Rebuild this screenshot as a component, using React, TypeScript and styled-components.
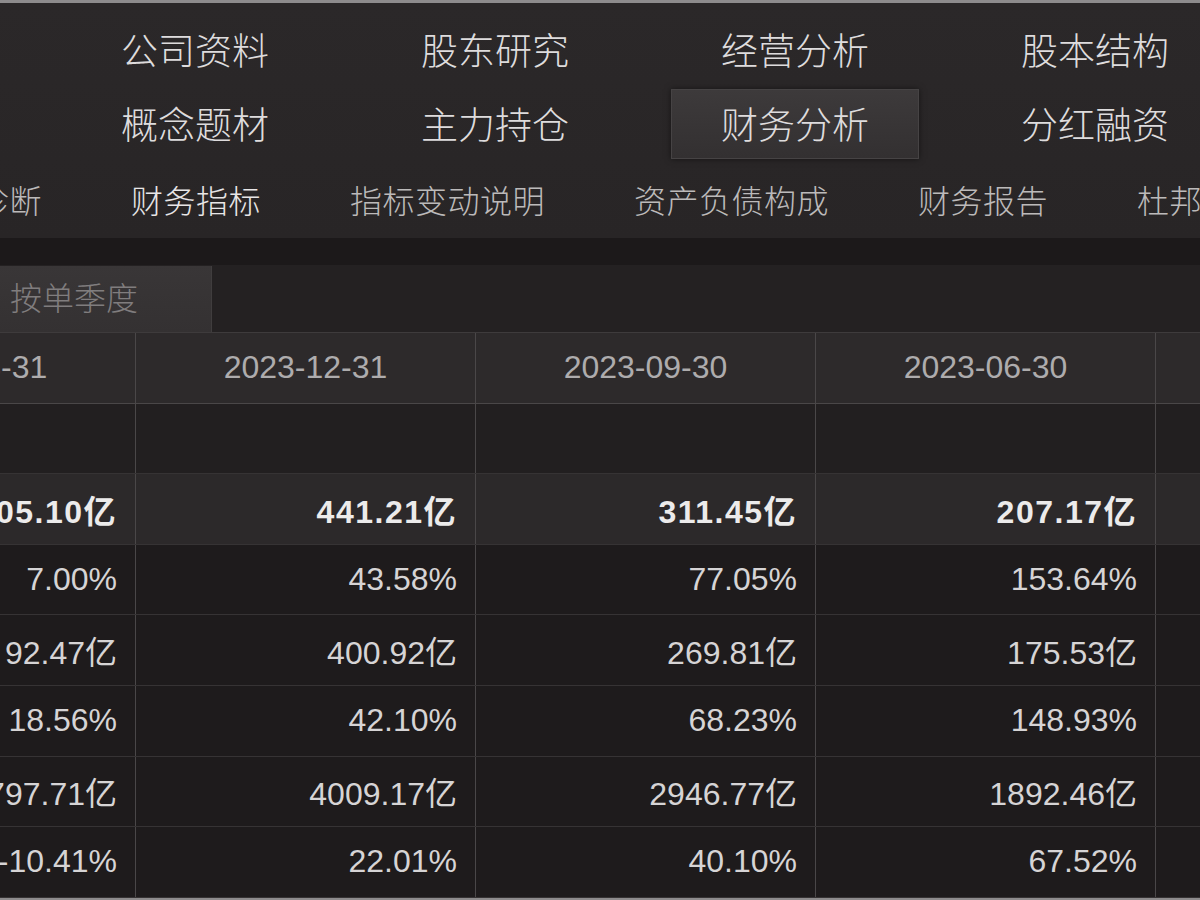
import React from 'react'
import styled, { createGlobalStyle } from 'styled-components'

type Row = {
  kind: 'section' | 'key' | 'plain'
  values: Array<string>
}

const GlobalStyle = createGlobalStyle`
  html, body {
    margin: 0;
    padding: 0;
    background: #1e1b1c;
    overflow: hidden;
  }
  body {
    font-family: "Liberation Sans", "Noto Sans CJK SC", sans-serif;
  }
`

const Screen = styled.div`
  width: 1200px;
  height: 900px;
  box-sizing: border-box;
  overflow: hidden;
  background: #1e1b1c;
  border-top: 3px solid #8e8c8d;
  border-bottom: 2px solid #8e8c8d;
`

const NavPanel = styled.div`
  background: linear-gradient(#2b2829, #282526);
`

const MainNav = styled.div`
  display: grid;
  grid-template-columns: repeat(4, 300px);
  grid-auto-rows: 70px;
  row-gap: 4px;
  margin-left: 45px;
  padding-top: 12px;
`

const MainNavItem = styled.div`
  display: flex;
  align-items: center;
  justify-content: center;
`

const MainNavLabel = styled.span`
  display: flex;
  align-items: center;
  justify-content: center;
  width: 248px;
  height: 70px;
  box-sizing: border-box;
  padding-bottom: 2px;
  font-family: "Noto Sans CJK SC", sans-serif;
  font-size: 37px;
  font-weight: 300;
  color: #dedcdd;
  border: 1px solid ${props => props.$active ? '#464344' : 'transparent'};
  background: ${props => props.$active ? 'linear-gradient(#3d3a3b, #333031)' : 'transparent'};
  box-shadow: ${props => props.$active ? '0 0 6px rgba(0, 0, 0, 0.5)' : 'none'};
`

const SubNav = styled.div`
  display: flex;
  align-items: center;
  gap: 89px;
  height: 79px;
  margin-left: -88px;
  white-space: nowrap;
`

const SubNavItem = styled.span`
  font-family: "Noto Sans CJK SC", sans-serif;
  font-size: 32px;
  font-weight: 300;
  letter-spacing: 0.5px;
  color: ${props => props.$active ? '#e8e6e7' : '#bcbaba'};
`

const Divider = styled.div`
  height: 27px;
  background: #1c191a;
`

const PeriodBar = styled.div`
  display: flex;
  height: 68px;
  background: #242122;
  border-bottom: 1px solid #3e3b3c;
  box-sizing: border-box;
`

const PeriodTab = styled.div`
  display: flex;
  align-items: center;
  width: 212px;
  height: 66px;
  margin-top: 1px;
  padding: 0 0 6px 10px;
  box-sizing: border-box;
  background: linear-gradient(#393637, #343132);
  border-right: 1px solid #403d3e;
  font-family: "Noto Sans CJK SC", sans-serif;
  font-size: 32px;
  font-weight: 300;
  color: #807d7e;
`

const Table = styled.div`
  margin-left: -204px;
`

const TableRow = styled.div`
  display: grid;
  grid-template-columns: repeat(5, 340px);
  height: 70.6px;
  box-sizing: border-box;
  border-bottom: 1px solid ${props => props.$kind === 'head' ? '#4a4748' : '#363334'};
  background: ${props =>
    props.$kind === 'head' ? '#2d2a2b' :
    props.$kind === 'key' ? '#2c292a' :
    props.$kind === 'section' ? '#221f20' : '#1e1b1c'};
`

const Cell = styled.div`
  display: flex;
  align-items: center;
  justify-content: ${props => props.$head ? 'center' : 'flex-end'};
  padding-right: ${props => props.$head ? '0' : '18px'};
  border-right: 1px solid #4a4748;
  font-size: 32px;
  font-weight: ${props => props.$bold ? 'bold' : 'normal'};
  letter-spacing: ${props => props.$bold ? '1.5px' : '0'};
  color: ${props => props.$head ? '#aeacad' : props.$bold ? '#ecebeb' : '#d6d4d5'};
  white-space: nowrap;
`

const mainTabs = [
  '公司资料', '股东研究', '经营分析', '股本结构',
  '概念题材', '主力持仓', '财务分析', '分红融资',
]

const subTabs = ['财务诊断', '财务指标', '指标变动说明', '资产负债构成', '财务报告', '杜邦分析']

const periods = ['2024-03-31', '2023-12-31', '2023-09-30', '2023-06-30', '2023-03-31']

const rows: Array<Row> = [
  { kind: 'section', values: ['', '', '', '', ''] },
  { kind: 'key', values: ['105.10亿', '441.21亿', '311.45亿', '207.17亿', '95.38亿'] },
  { kind: 'plain', values: ['7.00%', '43.58%', '77.05%', '153.64%', '112.30%'] },
  { kind: 'plain', values: ['92.47亿', '400.92亿', '269.81亿', '175.53亿', '86.42亿'] },
  { kind: 'plain', values: ['18.56%', '42.10%', '68.23%', '148.93%', '105.77%'] },
  { kind: 'plain', values: ['797.71亿', '4009.17亿', '2946.77亿', '1892.46亿', '836.85亿'] },
  { kind: 'plain', values: ['-10.41%', '22.01%', '40.10%', '67.52%', '75.28%'] },
]

const App = () => {
  return (
    <Screen>
      <GlobalStyle />
      <NavPanel>
        <MainNav>
          {mainTabs.map(tab => (
            <MainNavItem key={tab}>
              <MainNavLabel $active={tab === '财务分析'}>{tab}</MainNavLabel>
            </MainNavItem>
          ))}
        </MainNav>
        <SubNav>
          {subTabs.map(tab => (
            <SubNavItem key={tab} $active={tab === '财务指标'}>{tab}</SubNavItem>
          ))}
        </SubNav>
      </NavPanel>
      <Divider />
      <PeriodBar>
        <PeriodTab>按单季度</PeriodTab>
      </PeriodBar>
      <Table>
        <TableRow $kind="head">
          {periods.map(p => <Cell key={p} $head>{p}</Cell>)}
        </TableRow>
        {rows.map((row, i) => (
          <TableRow key={`row-${i}`} $kind={row.kind}>
            {row.values.map((v, j) => (
              <Cell key={`cell-${i}-${j}`} $bold={row.kind === 'key'}>{v}</Cell>
            ))}
          </TableRow>
        ))}
      </Table>
    </Screen>
  )
}

export default App
